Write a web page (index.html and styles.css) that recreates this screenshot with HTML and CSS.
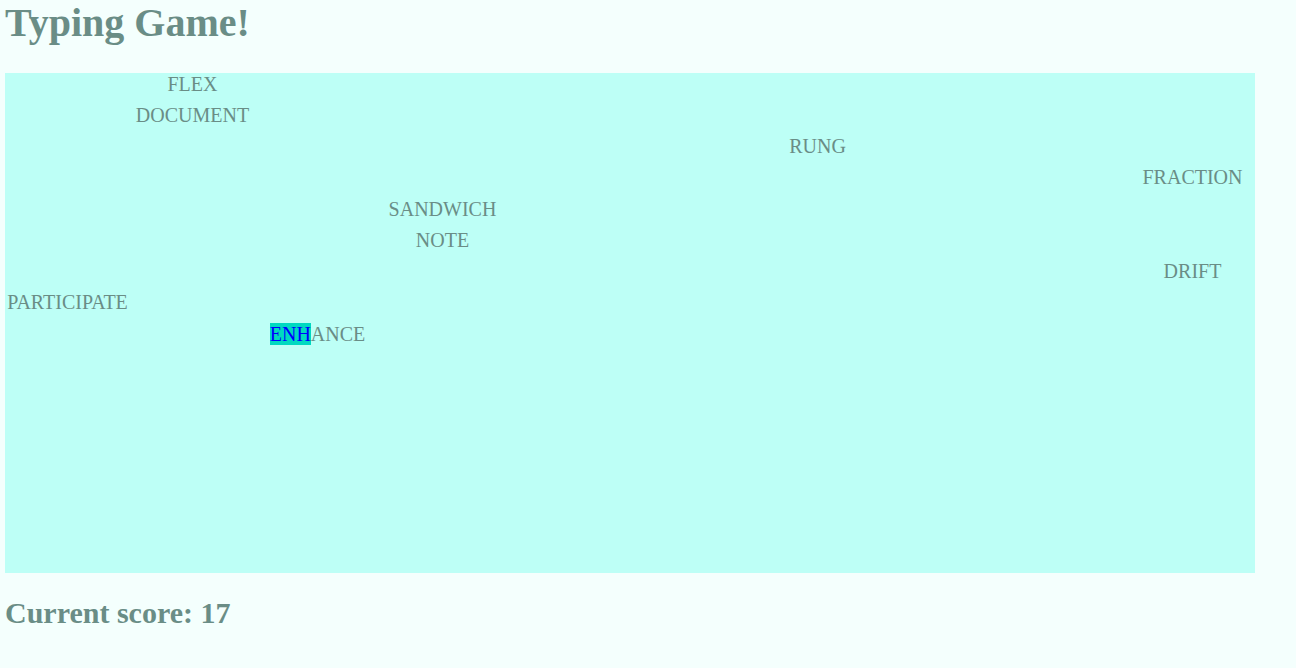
FILE: index.html
```html
<!DOCTYPE html>
<html>
<head>
<meta charset="utf-8">
<title>Typing Game!</title>
<link rel="stylesheet" href="styles.css">
</head>
<body>
<h1 class="title">Typing Game!</h1>
<div class="board">
  <div class="word" style="grid-column:2;grid-row:1">FLEX</div>
  <div class="word" style="grid-column:2;grid-row:2">DOCUMENT</div>
  <div class="word" style="grid-column:7;grid-row:3">RUNG</div>
  <div class="word" style="grid-column:10;grid-row:4">FRACTION</div>
  <div class="word" style="grid-column:4;grid-row:5">SANDWICH</div>
  <div class="word" style="grid-column:4;grid-row:6">NOTE</div>
  <div class="word" style="grid-column:10;grid-row:7">DRIFT</div>
  <div class="word" style="grid-column:1;grid-row:8">PARTICIPATE</div>
  <div class="word" style="grid-column:3;grid-row:9"><span class="typed">ENH</span>ANCE</div>
</div>
<h2 class="score">Current score: 17</h2>
</body>
</html>
```

FILE: styles.css
```css
html, body {
  margin: 0;
  background: #f4fffd;
}
body {
  padding: 0 5px;
  font-family: "Liberation Serif", "Times New Roman", serif;
  color: #6a8d86;
}
.title {
  margin: 0;
  padding-top: 0;
  font-size: 40px;
  font-weight: bold;
  line-height: 46px;
  height: 73px;
}
.board {
  width: 1250px;
  height: 500px;
  background: #bdfff6;
  display: grid;
  grid-template-columns: repeat(10, 125px);
  grid-template-rows: repeat(4, 31px 31px 31px 32px);
}
.word {
  font-size: 20px;
  line-height: 23px;
  text-align: center;
  align-self: start;
  white-space: nowrap;
}
.typed {
  background: #00d9c0;
  color: #0000ff;
}
.score {
  margin: 0;
  padding-top: 23px;
  font-size: 30px;
  font-weight: bold;
  line-height: 34px;
}
```
